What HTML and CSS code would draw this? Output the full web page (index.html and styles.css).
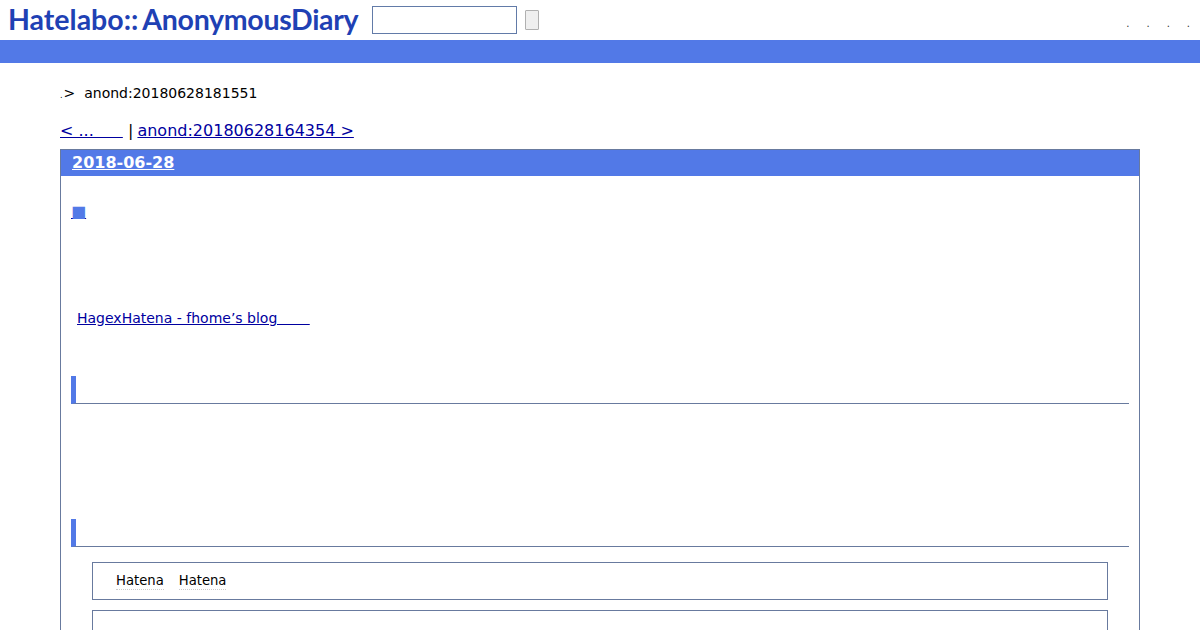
FILE: index.html
```html
<!DOCTYPE html>
<html>
<head lang="en">
  <meta charset="UTF-8">
  <title>anond:20180628181551</title>
  <link rel="stylesheet" href="styles.css">
</head>
<body>
  <div class="top">
    <h1 class="logo">Hatelabo::<span class="logo-name">AnonymousDiary</span></h1>
    <form class="search">
      <input class="search-input" type="text">
      <button class="search-btn" type="button"></button>
    </form>
    <ul class="menu">
      <li>.</li>
      <li>.</li>
      <li>.</li>
      <li>.</li>
    </ul>
  </div>
  <div class="bar"></div>

  <div class="crumb"><span class="dot">.</span>&gt; &nbsp;anond:20180628181551</div>
  <div class="pager">
    <a href="#">&lt; ... &emsp;&ensp;</a> <span class="sep">|</span> <a href="#">anond:20180628164354 &gt;</a>
  </div>

  <div class="day">
    <h2 class="day-title"><a href="#">2018-06-28</a></h2>
    <div class="body">
      <h3 class="entry-title"><a href="#"><span class="mark">■</span></a></h3>
      <p class="cite"><a href="#">HagexHatena - fhome’s blog &emsp;&emsp;</a></p>
      <h4 class="sub sub-first"></h4>
      <h4 class="sub sub-second"></h4>
      <div class="panel panel-tags">
        <span class="tag">Hatena</span>
        <span class="tag">Hatena</span>
      </div>
      <div class="panel panel-next"></div>
    </div>
  </div>
</body>
</html>
```

FILE: styles.css
```css
* {
  margin: 0;
  padding: 0;
  box-sizing: border-box;
}
body {
  background: #fff;
  color: #000;
  font-family: "DejaVu Sans", sans-serif;
}
a {
  color: #0000a0;
}
ul {
  list-style: none;
}

.top {
  display: flex;
  align-items: center;
  height: 40px;
  padding: 0 10px 0 8px;
}
.logo {
  width: 364px;
  margin-top: -3px;
  font-family: Lato, sans-serif;
  font-size: 28.5px;
  font-weight: 700;
  color: #1f41b4;
  white-space: nowrap;
}
.logo-name {
  margin-left: 4px;
  letter-spacing: -0.3px;
}
.search {
  display: flex;
  align-items: center;
  gap: 8px;
}
.search-input {
  width: 145px;
  height: 28px;
  border: 1px solid #627ba8;
  background: #fff;
}
.search-btn {
  width: 14px;
  height: 20px;
  border: 1px solid #b0b0b0;
  border-radius: 1px;
  background: #efefef;
}
.menu {
  display: flex;
  gap: 17px;
  margin-left: auto;
  margin-top: 6px;
  font-size: 10px;
  color: #333;
}

.bar {
  height: 23px;
  background: #5279e7;
}

.crumb {
  margin: 21px 60px 0;
  font-size: 14px;
  line-height: 18px;
}
.dot {
  margin-right: 1px;
  font-size: 8px;
}
.pager {
  margin: 16px 60px 0;
  font-size: 16px;
  line-height: 20px;
}
.sep {
  margin-right: -1px;
}

.day {
  height: 481px;
  margin: 8px 60px 0;
  border: 1px solid #687a9e;
  border-bottom: 0;
}
.day-title {
  height: 26px;
  padding-left: 11px;
  background: #5279e7;
  font-size: 16px;
  line-height: 25px;
}
.day-title a {
  color: #fff;
}
.body {
  padding: 0 10px;
}
.entry-title {
  margin-top: 26px;
  font-size: 16px;
  line-height: 20px;
  font-weight: 400;
}
.entry-title a {
  color: #5279e7;
  text-decoration-color: #0000a0;
}
.mark {
  padding: 0 2px 0 0;
}
.cite {
  margin-top: 87px;
  padding-left: 6px;
  font-size: 14px;
  line-height: 18px;
}
.sub {
  height: 28px;
  border-left: 5px solid #5279e7;
  border-bottom: 1px solid #687a9e;
}
.sub-first {
  margin-top: 49px;
}
.sub-second {
  margin-top: 115px;
}
.panel {
  margin: 0 21px;
  border: 1px solid #687a9e;
}
.panel-tags {
  display: flex;
  gap: 15px;
  height: 38px;
  margin-top: 15px;
  padding: 10px 23px;
  font-size: 13.2px;
  line-height: 16px;
}
.tag {
  height: 17px;
  border-bottom: 1px dotted #ccc;
}
.panel-next {
  height: 20px;
  margin-top: 10px;
  border-bottom: 0;
}
```
